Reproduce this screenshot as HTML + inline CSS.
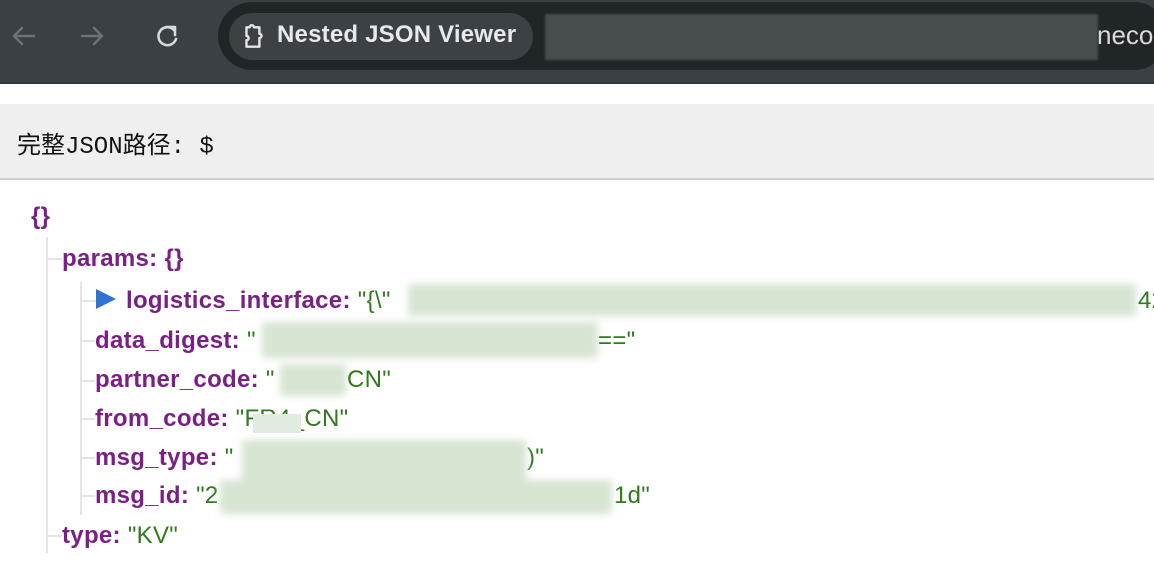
<!DOCTYPE html>
<html><head><meta charset="utf-8"><style>
body{margin:0;width:1154px;height:576px;position:relative;overflow:hidden;background:#fff;font-family:"Liberation Sans",Arial,sans-serif}
.a{position:absolute}
.top{left:0;top:0;width:1154px;height:82px;background:#3a4043;border-bottom:2px solid #33393b}
.k{position:absolute;color:#7a1f86;font-weight:bold;font-size:24px;letter-spacing:0.3px;line-height:28px;white-space:nowrap;margin-top:2px}
.s{color:#2e7a1c;font-weight:normal}
.bl{position:absolute;background:#d6e4d2;filter:blur(4px)}
.vl{position:absolute;background:#e4e4e4;width:2px}
.hl{position:absolute;background:#e4e4e4;height:2px}
</style></head><body>
<div class="a top"></div>
<svg class="a" style="left:8px;top:22px" width="180" height="30" viewBox="0 0 180 30">
<g fill="none" stroke="#6d7275" stroke-width="2.4" stroke-linecap="round" stroke-linejoin="round">
<path d="M26 14H6M14 6L6 14L14 22"/>
<path d="M74 14H94M86 6L94 14L86 22"/>
</g>
<g fill="none" stroke="#d8dadb" stroke-width="2.6" stroke-linecap="round">
<path d="M166 8A9 9 0 1 0 168 17"/>
<path d="M158 5H167V13" stroke-linejoin="round"/>
</g>
</svg>
<div class="a" style="left:218px;top:2px;width:950px;height:68px;background:#202628;border-radius:34px"></div>
<div class="a" style="left:229px;top:13px;width:304px;height:47px;background:#3b4144;border-radius:24px"></div>
<svg class="a" style="left:240px;top:23px" width="28" height="28" viewBox="0 0 26 26"><path d="M6 4h3a2 2 0 0 1 4 0h5v6a2 2 0 0 1 0 4v8H6v-6a2 2 0 0 0 0-4z" fill="none" stroke="#e6e7e8" stroke-width="2.2" stroke-linejoin="round"/></svg>
<div class="a" style="left:277px;top:21px;color:#e8e9ea;font-size:24px;font-weight:bold;letter-spacing:0.2px">Nested JSON Viewer</div>
<div class="a" style="left:545px;top:14px;width:553px;height:46px;background:#474c4e;filter:blur(1px)"></div>
<div class="a" style="left:1097px;top:20px;color:#d8dadb;font-size:26px">neco</div>
<div class="a" style="left:0;top:104px;width:1154px;height:74px;background:#efefef;border-bottom:2px solid #d0d0d0"></div>
<div class="a" style="left:17px;top:125px;font-size:24px;font-family:'Liberation Mono','Noto Sans CJK SC',monospace;color:#111">完整JSON路径: $</div>

<div class="vl" style="left:46px;top:237px;height:316px"></div>
<div class="vl" style="left:80px;top:282px;height:233px"></div>
<div class="hl" style="left:46px;top:258px;width:16px"></div>
<div class="hl" style="left:46px;top:535px;width:16px"></div>
<div class="hl" style="left:80px;top:300px;width:16px"></div>
<div class="hl" style="left:80px;top:340px;width:15px"></div>
<div class="hl" style="left:80px;top:380px;width:15px"></div>
<div class="hl" style="left:80px;top:418px;width:15px"></div>
<div class="hl" style="left:80px;top:457px;width:15px"></div>
<div class="hl" style="left:80px;top:495px;width:15px"></div>

<div class="k" style="left:31px;top:201px">{}</div>
<div class="k" style="left:62px;top:243px">params: {}</div>
<svg class="a" style="left:96px;top:289px" width="20" height="20"><path d="M0 0L20 10L0 20z" fill="#2f74d0"/></svg>
<div class="k" style="left:126px;top:285px">logistics_interface: <span class="s">"{\"</span></div>
<div class="bl" style="left:408px;top:284px;width:728px;height:32px"></div>
<div class="k" style="left:1138px;top:285px"><span class="s">42</span></div>
<div class="k" style="left:95px;top:325px">data_digest: <span class="s">"</span></div>
<div class="bl" style="left:262px;top:322px;width:336px;height:36px"></div>
<div class="k" style="left:598px;top:325px"><span class="s">=="</span></div>
<div class="k" style="left:95px;top:364px">partner_code: <span class="s">"</span></div>
<div class="bl" style="left:280px;top:364px;width:66px;height:32px"></div>
<div class="k" style="left:347px;top:364px"><span class="s">CN"</span></div>
<div class="k" style="left:95px;top:403px">from_code: <span class="s">"FR4_CN"</span></div>
<div class="bl" style="left:253px;top:414px;width:48px;height:19px;filter:none;background:#e2ebe0"></div>
<div class="k" style="left:95px;top:442px">msg_type: <span class="s">"</span></div>
<div class="k" style="left:527px;top:442px"><span class="s">)"</span></div>
<div class="k" style="left:95px;top:480px">msg_id: <span class="s">"2</span></div>
<div class="k" style="left:614px;top:480px"><span class="s">1d"</span></div>
<div class="bl" style="left:242px;top:440px;width:284px;height:62px"></div>
<div class="bl" style="left:220px;top:480px;width:392px;height:34px"></div>
<div class="k" style="left:62px;top:520px">type: <span class="s">"KV"</span></div>
</body></html>
